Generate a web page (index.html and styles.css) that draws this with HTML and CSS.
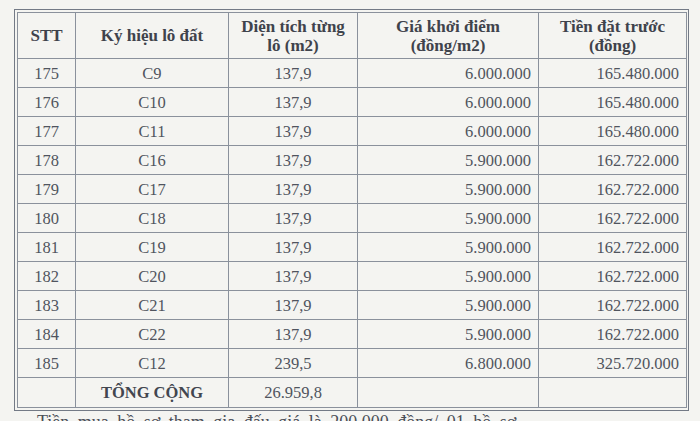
FILE: index.html
```html
<!DOCTYPE html>
<html lang="vi">
<head>
<meta charset="utf-8">
<link rel="stylesheet" href="styles.css">
</head>
<body>
<div class="frame">
<table class="lots">
<colgroup>
<col class="c1"><col class="c2"><col class="c3"><col class="c4"><col class="c5">
</colgroup>
<thead>
<tr class="head">
<th>STT</th>
<th>Ký hiệu lô đất</th>
<th>Diện tích từng<br>lô (m2)</th>
<th>Giá khởi điểm<br>(đồng/m2)</th>
<th>Tiền đặt trước<br>(đồng)</th>
</tr>
</thead>
<tbody>
<tr><td class="ctr">175</td><td class="ctr">C9</td><td class="ctr">137,9</td><td class="num">6.000.000</td><td class="num">165.480.000</td></tr>
<tr><td class="ctr">176</td><td class="ctr">C10</td><td class="ctr">137,9</td><td class="num">6.000.000</td><td class="num">165.480.000</td></tr>
<tr><td class="ctr">177</td><td class="ctr">C11</td><td class="ctr">137,9</td><td class="num">6.000.000</td><td class="num">165.480.000</td></tr>
<tr><td class="ctr">178</td><td class="ctr">C16</td><td class="ctr">137,9</td><td class="num">5.900.000</td><td class="num">162.722.000</td></tr>
<tr><td class="ctr">179</td><td class="ctr">C17</td><td class="ctr">137,9</td><td class="num">5.900.000</td><td class="num">162.722.000</td></tr>
<tr><td class="ctr">180</td><td class="ctr">C18</td><td class="ctr">137,9</td><td class="num">5.900.000</td><td class="num">162.722.000</td></tr>
<tr><td class="ctr">181</td><td class="ctr">C19</td><td class="ctr">137,9</td><td class="num">5.900.000</td><td class="num">162.722.000</td></tr>
<tr><td class="ctr">182</td><td class="ctr">C20</td><td class="ctr">137,9</td><td class="num">5.900.000</td><td class="num">162.722.000</td></tr>
<tr><td class="ctr">183</td><td class="ctr">C21</td><td class="ctr">137,9</td><td class="num">5.900.000</td><td class="num">162.722.000</td></tr>
<tr><td class="ctr">184</td><td class="ctr">C22</td><td class="ctr">137,9</td><td class="num">5.900.000</td><td class="num">162.722.000</td></tr>
<tr><td class="ctr">185</td><td class="ctr">C12</td><td class="ctr">239,5</td><td class="num">6.800.000</td><td class="num">325.720.000</td></tr>
<tr class="total"><td></td><td class="ctr strong">TỔNG CỘNG</td><td class="ctr">26.959,8</td><td></td><td></td></tr>
</tbody>
</table>
</div>
<p class="note">Tiền mua hồ sơ tham gia đấu giá là 200.000 đồng/ 01 hồ sơ.</p>
</body>
</html>
```
FILE: styles.css
```css
html, body {
  margin: 0;
  padding: 0;
  height: 421px;
  overflow: hidden;
  background: #f4f4f1;
}
body {
  font-family: "Liberation Serif", "Times New Roman", serif;
  color: #50545e;
}
.frame {
  margin: 9px 0 0 14px;
  width: 669px;
  border: 1px solid #737a86;
  padding: 2px;
}
.lots {
  width: 669px;
  border-collapse: collapse;
  table-layout: fixed;
  border: 1px solid #7c838f;
}
.c1 { width: 58px; }
.c2 { width: 153px; }
.c3 { width: 129px; }
.c4 { width: 181px; }
.c5 { width: 148px; }
.lots th, .lots td {
  border: 1px solid #8a919c;
  padding: 0 7px;
  font-size: 16.5px;
  line-height: 19px;
}
.lots th {
  font-weight: bold;
  color: #3f434c;
  font-size: 17px;
  text-align: center;
}
.head { height: 46px; }
.lots tbody tr { height: 29px; }
.lots tbody tr.total { height: 30px; }
.ctr { text-align: center; }
.num { text-align: right; }
.strong { font-weight: bold; color: #42464f; font-size: 17px; }
.note {
  margin: 1px 0 0 37px;
  font-size: 18px;
  line-height: 20px;
  word-spacing: 4px;
  color: #4a4e57;
}
```
